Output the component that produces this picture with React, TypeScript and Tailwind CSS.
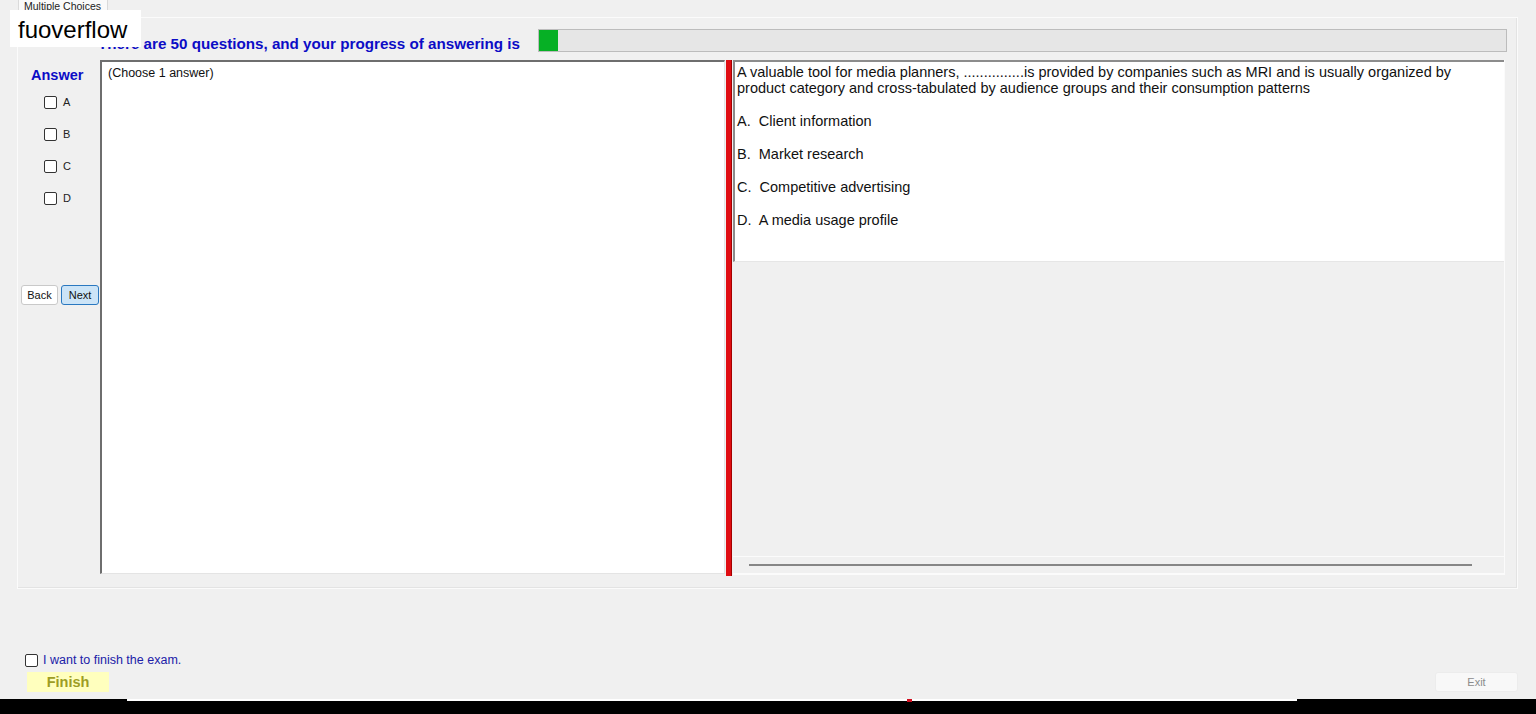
import React from "react";

const options = [
  ["A.", "Client information"],
  ["B.", "Market research"],
  ["C.", "Competitive advertising"],
  ["D.", "A media usage profile"],
];

function Box({ className = "" }: { className?: string }) {
  return <span className={"block w-[13px] h-[13px] rounded-[2px] border border-[#333] bg-white " + className} />;
}

export default function App() {
  return (
    <div className="relative w-[1536px] h-[714px] overflow-hidden bg-[#f0f0f0] font-['Liberation_Sans',Arial,sans-serif] text-black">
      {/* Tab strip */}
      <div className="h-[17px] pl-[18px]">
        <div className="w-[90px] h-[13px] bg-[#fafafa] border-x border-b border-[#dadada] pl-[5px] text-[10.5px] leading-[12px] text-[#222] whitespace-nowrap">
          Multiple Choices
        </div>
      </div>

      {/* Tab page */}
      <div className="ml-[17px] w-[1501px] h-[572px] border border-[#fbfbfb] shadow-[inset_-1px_-1px_0_#e3e3e3]">
        {/* Header row */}
        <div className="flex h-[23px] mt-[11px]">
          <div className="ml-[80px] w-[440px] self-end text-[15.2px] font-bold leading-[16px] text-[#0c0cc6] whitespace-nowrap">
            There are 50 questions, and your progress of answering is
          </div>
          <div className="w-[969px] h-[23px] border border-[#bcbcbc] bg-[#e6e6e6] flex">
            <div className="w-[19px] h-full bg-[#06b025]" />
          </div>
        </div>

        {/* Content row */}
        <div className="flex mt-[8px] h-[516px]">
          {/* Answer column */}
          <div className="w-[82px] flex flex-col">
            <div className="pl-[13px] pt-[7px] text-[14.5px] font-bold leading-[16px] text-[#0c0cc6]">Answer</div>
            <div className="mt-[13px] flex flex-col gap-[19px] pl-[26px]">
              {["A", "B", "C", "D"].map((l) => (
                <div key={l} className="flex items-center h-[13px] gap-[6px] text-[11px] text-[#222]">
                  <Box />
                  <span>{l}</span>
                </div>
              ))}
            </div>
            <div className="mt-[80px] ml-[3px] flex gap-[3px]">
              <button className="w-[37px] h-[20px] rounded-[3px] border border-[#c9c9c9] bg-white text-[11px] text-[#111]">Back</button>
              <button className="w-[38px] h-[20px] rounded-[3px] border border-[#2a78c0] bg-[#cce4f7] text-[11px] text-[#111]">Next</button>
            </div>
          </div>

          {/* Left text box */}
          <div className="w-[625px] h-[514px] bg-white border-t-2 border-l-2 border-[#6e6e6e] border-r border-b border-r-[#e4e4e4] border-b-[#e4e4e4] pl-[6px] pt-[4px] text-[12.5px] leading-[14px] text-[#111]">
            (Choose 1 answer)
          </div>

          {/* Splitter */}
          <div className="ml-[1px] w-[6px] h-[516px] bg-[#e00d12] border-r border-[#a30000]" />

          {/* Right panel */}
          <div className="ml-[1px] w-[772px] h-[515px] flex flex-col border-r border-b border-[#fbfbfb]">
            <div className="h-[202px] bg-white border-t-2 border-l-2 border-[#8c8c8c] border-b border-b-[#e6e6e6] pl-[2px] pt-[2px] text-[14.5px] leading-[16px] text-[#111]">
              <p>
                A valuable tool for media planners, ...............is provided by companies such as MRI and is usually organized by
                <br />
                product category and cross-tabulated by audience groups and their consumption patterns
              </p>
              {options.map(([k, v]) => (
                <p key={k} className="mt-[17px] whitespace-pre">
                  {k}  {v}
                </p>
              ))}
            </div>
            <div className="flex-1 flex flex-col justify-end">
              <div className="h-[18px] border-t border-b border-[#fbfbfb] flex items-center pl-[16px]">
                <div className="w-[723px] h-[2px] bg-[#868686]" />
              </div>
            </div>
          </div>
        </div>
      </div>

      {/* Bottom area */}
      <div className="mt-[65px] ml-[25px] flex items-center gap-[5px] h-[13px]">
        <Box />
        <span className="text-[12.5px] text-[#2020a8] leading-[13px]">I want to finish the exam.</span>
      </div>
      <div className="mt-[5px] flex justify-between pr-[18px]">
        <button className="ml-[27px] w-[82px] h-[20px] bg-[#ffffbe] text-[14.5px] font-bold leading-[20px] text-[#9d9d24]">Finish</button>
        <button className="w-[83px] h-[20px] rounded-[3px] border border-[#ececec] bg-[#f8f8f8] text-[11px] text-[#8c8c8c]">Exit</button>
      </div>

      {/* Bottom black strip */}
      <div className="absolute left-0 bottom-0 w-full h-[15px] bg-black">
        <div className="ml-[127px] w-[1170px] h-[2px] bg-white" />
        <div className="absolute left-[907px] top-0 w-[5px] h-[3px] bg-[#d01020]" />
      </div>

      {/* Watermark label */}
      <div className="absolute left-[10px] top-[10px] w-[131px] h-[37px] bg-white pl-[8px] text-[24px] leading-[40px] text-black">
        fuoverflow
      </div>
    </div>
  );
}
